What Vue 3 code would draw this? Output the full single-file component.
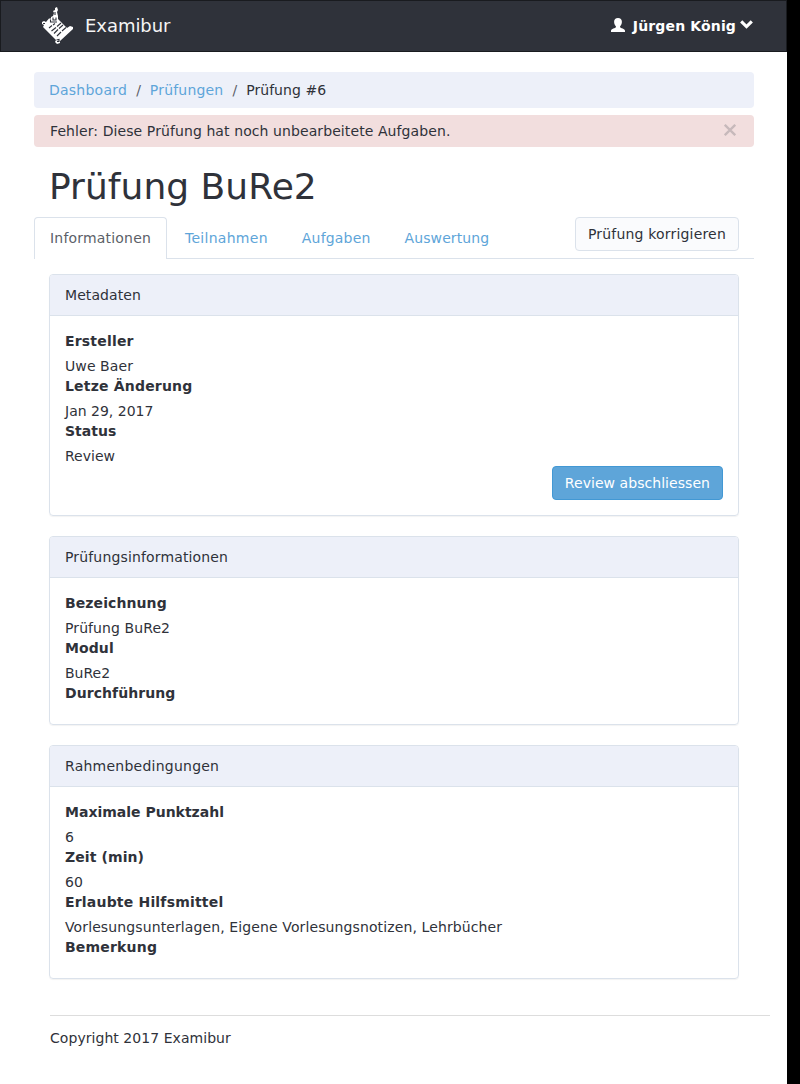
<script setup>
const tabs = [
  { label: 'Informationen', tracking: 'wide' },
  { label: 'Teilnahmen', tracking: 'wider' },
  { label: 'Aufgaben', tracking: 'wide' },
  { label: 'Auswertung', tracking: 'mid' },
]
const panels = [
  {
    title: 'Metadaten',
    tracking: 'mid',
    action: 'Review abschliessen',
    fields: [
      ['Ersteller', 'Uwe Baer', 'wide', 'mid'],
      ['Letze Änderung', 'Jan 29, 2017', 'wide', ''],
      ['Status', 'Review', '', ''],
    ],
  },
  {
    title: 'Prüfungsinformationen',
    tracking: 'semi',
    fields: [
      ['Bezeichnung', 'Prüfung BuRe2', 'mid', 'mid'],
      ['Modul', 'BuRe2', 'mid', ''],
      ['Durchführung', '', 'tight', ''],
    ],
  },
  {
    title: 'Rahmenbedingungen',
    tracking: 'wider',
    fields: [
      ['Maximale Punktzahl', '6', '', ''],
      ['Zeit (min)', '60', 'mid', ''],
      ['Erlaubte Hilfsmittel', 'Vorlesungsunterlagen, Eigene Vorlesungsnotizen, Lehrbücher', 'wide', 'long'],
      ['Bemerkung', '', 'wide', ''],
    ],
  },
]
</script>

<template>
  <div class="page">
    <nav class="navbar">
      <a class="brand">
        <svg class="logo" width="32" height="38" viewBox="0 0 32 38">
          <path fill="#fff" d="M0 15L2 14L4 15L7 11.5H9V10L11 9L12 6L11 4L13 3V1L15 0L16 3L15 5L16 9V12L18 14L25 21L28 19L31 20V22L18 34V36L15 37L13 35L14 33L1 20L2 18L0 17Z" />
          <path stroke="#2f323a" stroke-width="1.1" fill="none" d="M1 16.5H3M11 10.5V13H14V10.5M13 5V8M8.5 12.5V15H15M7 21L10 18.5M11 18L13 16.5M9.5 24L14 20.5M15 19.5L19 16M12 26.5L16 22.5M17 21.5L21 18M15 29L19 25M20 24L24 20.5M14.5 33L17 32.5V34.5H15" />
        </svg>
        <span>Examibur</span>
      </a>
      <a class="user">
        <svg class="person" width="14" height="14" viewBox="0 0 14 14"><path fill="#fff" d="M7 0C4.5 0 3.1 1.5 3.1 3.8C3.1 6 4 7.3 4.9 8.2V9.3C4.5 10.4 0 10.5 0 12.8V14H14V12.8C14 10.5 9.5 10.4 9.1 9.3V8.2C10 7.3 10.9 6 10.9 3.8C10.9 1.5 9.5 0 7 0Z" /></svg>
        <span class="name">Jürgen König</span>
        <svg class="chevron" width="13" height="9" viewBox="0 0 13 9"><path fill="none" stroke="#fff" stroke-width="3.1" d="M1.2 1.3L6.5 6.5L11.8 1.3" /></svg>
      </a>
    </nav>

    <main class="container">
      <ol class="breadcrumb">
        <li><a class="wider">Dashboard</a></li>
        <li><a class="wide">Prüfungen</a></li>
        <li><span class="tight">Prüfung #6</span></li>
      </ol>
      <div class="alert">
        <span class="long-alert">Fehler: Diese Prüfung hat noch unbearbeitete Aufgaben.</span>
        <svg class="close" width="12" height="12" viewBox="0 0 12 12"><path fill="none" stroke="#c7b9bb" stroke-width="2.3" d="M.8 .8L11.2 11.2M11.2 .8L.8 11.2" /></svg>
      </div>
      <h1>Prüfung BuRe2</h1>
      <div class="tabs">
        <a v-for="(tab, i) in tabs" :key="tab.label" class="tab" :class="[tab.tracking, { active: i === 0 }]">{{ tab.label }}</a>
        <button class="btn wide">Prüfung korrigieren</button>
      </div>
      <section v-for="panel in panels" :key="panel.title" class="panel">
        <header :class="panel.tracking">{{ panel.title }}</header>
        <div class="body" :class="{ open: !panel.action }">
          <dl>
            <template v-for="[label, value, labelTracking, valueTracking] in panel.fields" :key="label">
              <dt :class="labelTracking">{{ label }}</dt>
              <dd v-if="value" :class="valueTracking">{{ value }}</dd>
            </template>
          </dl>
          <button v-if="panel.action" class="btn primary tight">{{ panel.action }}</button>
        </div>
      </section>
    </main>
    <footer class="tight">Copyright 2017 Examibur</footer>
  </div>
</template>

<style>
body { background: #000; }
</style>

<style scoped>
* { box-sizing: border-box; }
.page {
  width: 787px;
  height: 1084px;
  background: #fff;
  color: #2f323a;
  font: 14px/20px "DejaVu Sans", sans-serif;
  overflow: hidden;
}
.navbar {
  display: flex;
  justify-content: space-between;
  height: 52px;
  padding: 0 33px 0 41px;
  background: #2f323a;
  border: 1px solid #191b1f;
  color: #fff;
}
.brand { display: flex; align-items: center; gap: 11px; font-size: 18px; letter-spacing: -.05px; color: #f5f5f5; }
.brand span { line-height: 50px; }
.logo { margin-top: -1px; }
.user { display: flex; align-items: center; font-weight: bold; }
.person { margin-top: -2px; }
.name { margin: -1px 4px 0 8px; letter-spacing: .14px; }
.chevron { margin-top: -3px; }
.container { width: 720px; margin: 20px 0 0 34px; }
.breadcrumb {
  display: flex;
  height: 36px;
  margin: 0;
  padding: 8px 15px;
  background: #edf0f9;
  border-radius: 4px;
  list-style: none;
}
.breadcrumb li + li::before { content: "/"; padding: 0 9px; color: #5c5f68; }
.breadcrumb a, .tab { color: #5ea5d9; }
.alert {
  display: flex;
  justify-content: space-between;
  height: 32px;
  margin-top: 7px;
  padding: 6px 18px 6px 16px;
  background: #f2dede;
  border-radius: 4px;
}
.close { margin-top: 3px; }
h1 { margin: 20px 0 10px 15px; font-size: 36px; font-weight: 500; line-height: 40px; letter-spacing: .04px; }
.tabs {
  display: flex;
  height: 42px;
  border-bottom: 1px solid #dbe2eb;
}
.tab {
  height: 42px;
  margin-right: 2px;
  padding: 10px 15px;
  border: 1px solid transparent;
  border-bottom: 0;
  border-radius: 4px 4px 0 0;
}
.tab.wider { letter-spacing: .28px; }
.tab.active { background: #fff; border-color: #dbe2eb; color: #5c5f68; }
.btn {
  height: 34px;
  padding: 6px 12px;
  border: 1px solid #dbe2eb;
  border-radius: 4px;
  background: #fafbfd;
  color: #2f323a;
  font: inherit;
}
.tabs .btn { margin: 0 15px 0 auto; }
.panel {
  margin: 15px 15px 0;
  border: 1px solid #dbe2eb;
  border-radius: 4px;
  box-shadow: 0 1px 1px rgba(0, 0, 0, .05);
}
.panel + .panel { margin-top: 20px; }
.panel header {
  height: 41px;
  padding: 10px 15px;
  background: #edf0f9;
  border-bottom: 1px solid #dbe2eb;
  border-radius: 3px 3px 0 0;
}
.body { padding: 15px; }
.body.open { padding-bottom: 16px; }
dl { margin: 0; }
dt { margin-bottom: 5px; font-weight: bold; }
dd { margin: 0; }
.primary { display: block; margin-left: auto; background: #5ea5d9; border-color: #4298d4; color: #fff; }
footer { width: 720px; margin: 36px 0 0 50px; padding-top: 12px; border-top: 1px solid #ddd; }
.tight { letter-spacing: .05px; }
.long-alert { letter-spacing: .09px; }
.mid { letter-spacing: .09px; }
.long { letter-spacing: .112px; }
.semi { letter-spacing: .15px; }
.wide { letter-spacing: .19px; }
.wider { letter-spacing: .24px; }
</style>
